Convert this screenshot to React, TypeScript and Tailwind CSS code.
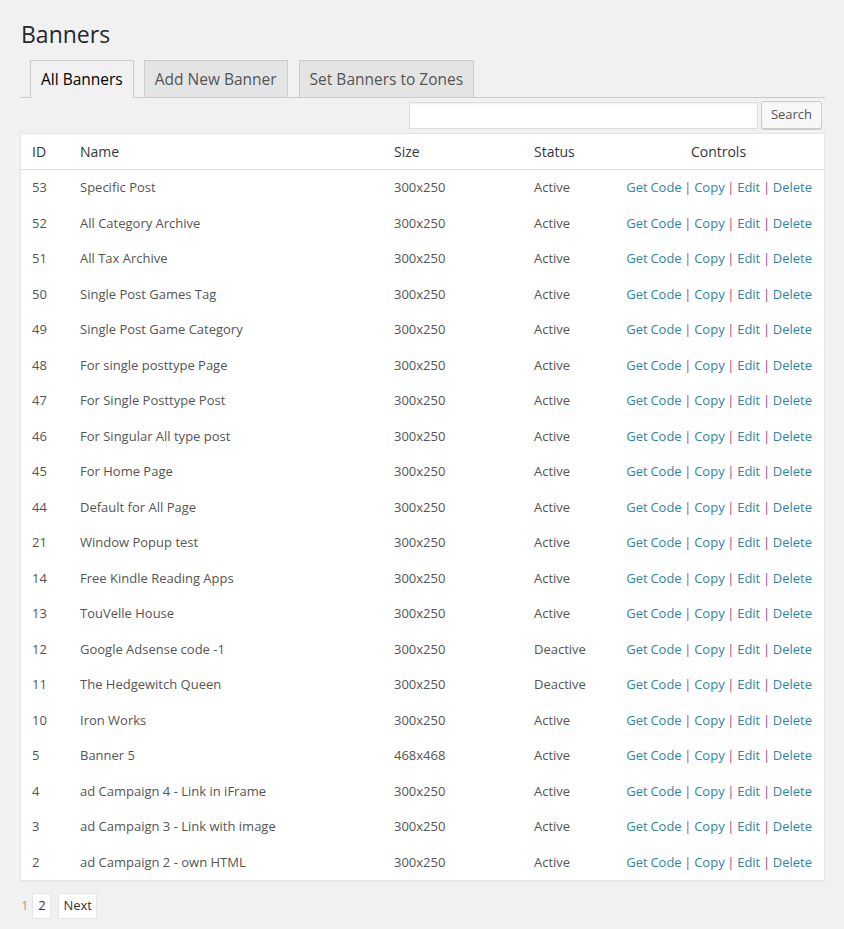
import React from "react";

const rows: [string, string, string, string][] = [
  ["53", "Specific Post", "300x250", "Active"],
  ["52", "All Category Archive", "300x250", "Active"],
  ["51", "All Tax Archive", "300x250", "Active"],
  ["50", "Single Post Games Tag", "300x250", "Active"],
  ["49", "Single Post Game Category", "300x250", "Active"],
  ["48", "For single posttype Page", "300x250", "Active"],
  ["47", "For Single Posttype Post", "300x250", "Active"],
  ["46", "For Singular All type post", "300x250", "Active"],
  ["45", "For Home Page", "300x250", "Active"],
  ["44", "Default for All Page", "300x250", "Active"],
  ["21", "Window Popup test", "300x250", "Active"],
  ["14", "Free Kindle Reading Apps", "300x250", "Active"],
  ["13", "TouVelle House", "300x250", "Active"],
  ["12", "Google Adsense code -1", "300x250", "Deactive"],
  ["11", "The Hedgewitch Queen", "300x250", "Deactive"],
  ["10", "Iron Works", "300x250", "Active"],
  ["5", "Banner 5", "468x468", "Active"],
  ["4", "ad Campaign 4 - Link in iFrame", "300x250", "Active"],
  ["3", "ad Campaign 3 - Link with image", "300x250", "Active"],
  ["2", "ad Campaign 2 - own HTML", "300x250", "Active"],
];

const Sep = () => <span className="text-[#a0467e]"> | </span>;

export default function App() {
  return (
    <div
      className="min-h-[929px] bg-[#f1f1f1] pl-[20px] pr-[19px] pt-[20px] text-[#444]"
      style={{ fontFamily: '"Open Sans", "Noto Sans", sans-serif' }}
    >
      <h1 className="text-[23px] leading-[29px] text-[#23282d] pl-[1px]">Banners</h1>

      <div className="mt-[11px] flex items-end border-b border-[#ccc] pl-[10px] h-[38px]">
        <div className="h-[38px] px-[10px] pt-[1px] mr-[10px] border border-[#ccc] border-b-0 bg-[#f1f1f1] text-[15.5px] text-[#000] flex items-center -mb-px relative whitespace-nowrap">
          All Banners
        </div>
        <div className="h-[37px] px-[10px] pt-[1px] mr-[11px] border border-[#ccc] border-b-0 bg-[#e4e4e4] text-[15.5px] text-[#555] flex items-center whitespace-nowrap">
          Add New Banner
        </div>
        <div className="h-[37px] px-[10px] pt-[1px] border border-[#ccc] border-b-0 bg-[#e4e4e4] text-[15.5px] text-[#555] flex items-center whitespace-nowrap">
          Set Banners to Zones
        </div>
      </div>

      <div className="flex justify-end items-center mt-[3px] pr-[3px] gap-[3px]">
        <input
          className="w-[349px] h-[27px] bg-white border border-[#ddd] shadow-[inset_0_1px_2px_rgba(0,0,0,0.07)] outline-none"
          type="text"
        />
        <button className="w-[61px] h-[28px] border border-[#ccc] bg-[#f7f7f7] rounded-[3px] text-[13px] text-[#555] shadow-[0_1px_0_#ccc]">
          Search
        </button>
      </div>

      <div className="mt-[4px] bg-white border border-[#e5e5e5] shadow-[0_1px_1px_rgba(0,0,0,0.04)]">
        <div className="grid grid-cols-[48px_314px_140px_90px_1fr] h-[36px] items-center border-b border-[#e1e1e1] text-[14px] text-[#32373c]">
          <div className="pl-[11px]">ID</div>
          <div className="pl-[11px]">Name</div>
          <div className="pl-[11px]">Size</div>
          <div className="pl-[11px]">Status</div>
          <div className="text-center">Controls</div>
        </div>
        {rows.map((r) => (
          <div
            key={r[0]}
            className="grid grid-cols-[48px_314px_140px_90px_1fr] h-[35.5px] items-center text-[13px] text-[#555]"
          >
            <div className="pl-[11px]">{r[0]}</div>
            <div className="pl-[11px] whitespace-nowrap">{r[1]}</div>
            <div className="pl-[11px]">{r[2]}</div>
            <div className="pl-[11px] whitespace-nowrap">{r[3]}</div>
            <div className="text-right pr-[12px] text-[#2e86a4] whitespace-nowrap [word-spacing:-0.7px]">
              <span>Get Code</span>
              <Sep />
              <span>Copy</span>
              <Sep />
              <span>Edit</span>
              <Sep />
              <span>Delete</span>
            </div>
          </div>
        ))}
      </div>

      <div className="flex items-center mt-[12px] text-[13px]">
        <span className="text-[#a9a27a] pl-[1px] mr-[4px]">1</span>
        <span className="h-[26px] w-[19px] flex items-center justify-center bg-white border border-[#e5e5e5] text-[#333] mr-[7px]">
          2
        </span>
        <span className="h-[26px] px-[4px] flex items-center justify-center bg-white border border-[#e5e5e5] text-[#333]">
          Next
        </span>
      </div>
    </div>
  );
}
